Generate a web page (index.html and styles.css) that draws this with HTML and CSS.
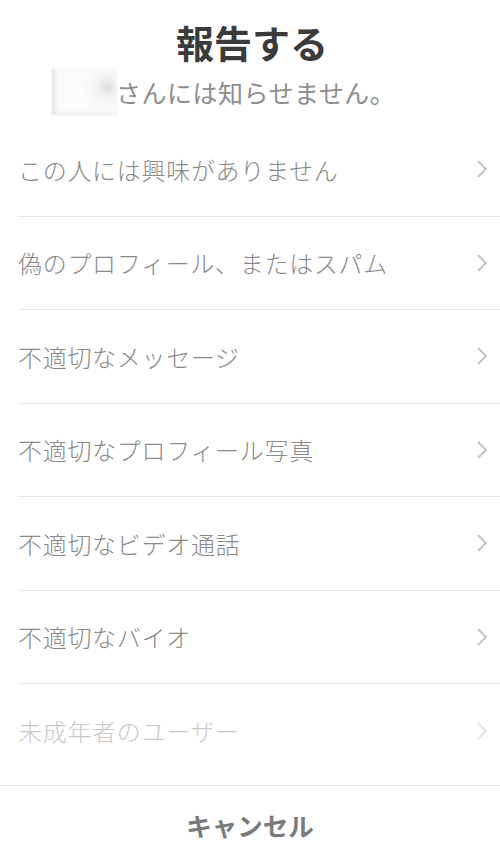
FILE: index.html
```html
<!DOCTYPE html>
<html lang="ja">
    <head>
        <meta charset="UTF-8" />
        <meta name="viewport" content="width=device-width, initial-scale=1.0" />
        <title>報告する</title>
        <link rel="stylesheet" href="styles.css">
    </head>
    <body>
        <div class="sheet">
            <div class="header">
                <h1 class="title">報告する</h1>
                <div class="subtitle">
                    <span class="name-blur"></span>
                    <span class="subtitle-text">さんには知らせません。</span>
                </div>
            </div>

            <ul class="reasons">
                <li class="reason">
                    <span>この人には興味がありません</span>
                    <svg class="chevron" width="12" height="20" viewBox="0 0 12 20"><polyline points="2,2 10,10 2,18" /></svg>
                </li>
                <li class="reason">
                    <span>偽のプロフィール、またはスパム</span>
                    <svg class="chevron" width="12" height="20" viewBox="0 0 12 20"><polyline points="2,2 10,10 2,18" /></svg>
                </li>
                <li class="reason">
                    <span>不適切なメッセージ</span>
                    <svg class="chevron" width="12" height="20" viewBox="0 0 12 20"><polyline points="2,2 10,10 2,18" /></svg>
                </li>
                <li class="reason">
                    <span>不適切なプロフィール写真</span>
                    <svg class="chevron" width="12" height="20" viewBox="0 0 12 20"><polyline points="2,2 10,10 2,18" /></svg>
                </li>
                <li class="reason">
                    <span>不適切なビデオ通話</span>
                    <svg class="chevron" width="12" height="20" viewBox="0 0 12 20"><polyline points="2,2 10,10 2,18" /></svg>
                </li>
                <li class="reason">
                    <span>不適切なバイオ</span>
                    <svg class="chevron" width="12" height="20" viewBox="0 0 12 20"><polyline points="2,2 10,10 2,18" /></svg>
                </li>
                <li class="reason disabled">
                    <span>未成年者のユーザー</span>
                    <svg class="chevron" width="12" height="20" viewBox="0 0 12 20"><polyline points="2,2 10,10 2,18" /></svg>
                </li>
            </ul>

            <button class="cancel">キャンセル</button>
        </div>
    </body>
</html>
```

FILE: styles.css
```css
body {
    margin: 0;
    padding: 0;
    background-color: #ffffff;
    font-family: "Noto Sans CJK JP", "Noto Sans", sans-serif;
}
.sheet {
    width: 500px;
    height: 861px;
    display: flex;
    flex-direction: column;
    overflow: hidden;
}
.header {
    padding-top: 20px;
    display: flex;
    flex-direction: column;
    align-items: center;
}
.title {
    margin: 0 0 0 4px;
    font-size: 38px;
    line-height: 44px;
    font-weight: 700;
    color: #3b3b3b;
}
.subtitle {
    align-self: stretch;
    margin-top: 4px;
    padding-left: 52px;
    display: flex;
    align-items: center;
    height: 47px;
}
.name-blur {
    width: 65px;
    height: 47px;
    background: radial-gradient(circle at 85% 40%, #dcdcdc 0, #f4f4f4 18%, #fbfbfb 40%), #fbfbfb;
    box-shadow: inset 4px 0 4px -2px #d6d6d6, inset 0 -3px 4px -2px #e2e2e2;
    filter: blur(1px);
}
.subtitle-text {
    margin-left: -1px;
    font-size: 25px;
    letter-spacing: 0.5px;
    line-height: 47px;
    padding-top: 2px;
    color: #8d8d8d;
}
.reasons {
    list-style: none;
    margin: 8px 0 0 18px;
    padding: 0;
}
.reason {
    height: 93.5px;
    box-sizing: border-box;
    border-bottom: 1px solid #e6e6e6;
    padding-right: 12px;
    display: flex;
    align-items: center;
    justify-content: space-between;
    font-size: 24px;
    font-weight: 300;
    letter-spacing: 0.7px;
    color: #8a8a8a;
}
.chevron polyline {
    fill: none;
    stroke: #c2c2c2;
    stroke-width: 1.8;
}
.reason.disabled {
    height: 101px;
    border-bottom: none;
    padding-bottom: 8px;
    color: #c9c9c9;
}
.reason.disabled .chevron polyline {
    stroke: #e2e2e2;
}
.cancel {
    height: 76px;
    border: none;
    border-top: 1px solid #e2e2e2;
    background-color: #ffffff;
    font-family: "Noto Sans CJK JP", "Noto Sans", sans-serif;
    font-size: 25.5px;
    font-weight: 700;
    color: #7a7a7a;
    padding: 2px 0 0 0;
    cursor: pointer;
}
```
